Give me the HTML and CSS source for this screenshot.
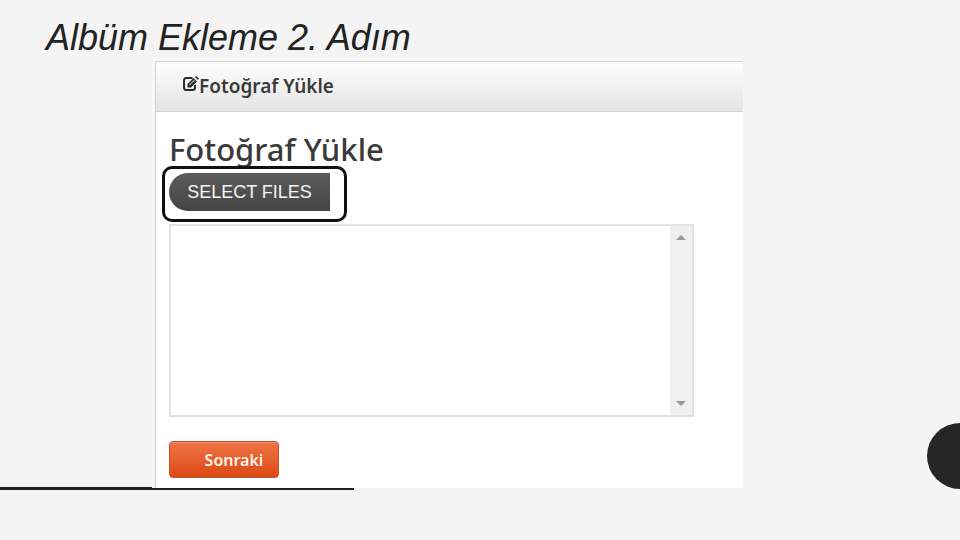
FILE: index.html
```html
<!DOCTYPE html>
<html lang="tr">
<head>
  <meta charset="utf-8">
  <title>Albüm Ekleme 2. Adım</title>
  <link rel="stylesheet" href="styles.css">
</head>
<body>
  <main class="slide">
    <h1 class="slide-title">Albüm Ekleme 2. Adım</h1>
    <div class="shot">
      <section class="panel">
        <header class="panel-header">
          <svg class="edit-icon" viewBox="0 0 17 16" aria-hidden="true">
            <path d="M10.5 2H4.500Q2 2 2 4.500v7Q2 14 4.500 14h6q2.500 0 2.500-2.500V9" fill="none" stroke="#2b2b2b" stroke-width="2"/>
            <path d="M5.500 11.500V8l6-6 3.500 3.500-6 6z" fill="#2b2b2b"/>
            <path d="M13 1l1-1 3 2.500-1 1.500z" fill="#2b2b2b"/>
            <path d="M7.500 9l5-5" stroke="#f5f5f5" stroke-width="1"/>
          </svg>
          <span>Fotoğraf Yükle</span>
        </header>
        <form class="panel-body">
          <h2 class="panel-title"><label for="files">Fotoğraf Yükle</label></h2>
          <div class="picker">
            <button class="select-files" type="button">SELECT FILES</button>
          </div>
          <div class="queue">
            <textarea class="queue-list" id="files"></textarea>
            <div class="scrollbar" aria-hidden="true">
              <svg class="arrow" viewBox="0 0 10 5"><path d="M0 5L5 0l5 5z"/></svg>
              <svg class="arrow" viewBox="0 0 10 5"><path d="M0 0l5 5 5-5z"/></svg>
            </div>
          </div>
          <button class="next" type="submit">Sonraki</button>
        </form>
      </section>
    </div>
  </main>
</body>
</html>
```
FILE: styles.css
```css
* {
  box-sizing: border-box;
}

body {
  margin: 0;
  background: #f4f4f4;
  font-family: "Noto Sans", "Open Sans", sans-serif;
  color: #3a3a3a;
}

.slide {
  position: relative;
  isolation: isolate;
  min-height: 100vh;
  overflow: hidden;
  padding: 18px 217px 52px 152px;
}

/* rule and disc of the slide theme, behind the content */
.slide::before {
  content: "";
  position: absolute;
  z-index: -1;
  left: 0;
  bottom: 50px;
  width: 354px;
  height: 3px;
  background: #231f20;
}

.slide::after {
  content: "";
  position: absolute;
  right: -33px;
  bottom: 51px;
  width: 66px;
  height: 66px;
  border-radius: 50%;
  background: #262626;
}

.slide-title {
  margin: 0 0 0 -106px;
  font: italic 400 36px/39px "Liberation Sans", Arial, sans-serif;
  color: #222;
  white-space: nowrap;
}

.shot {
  padding: 4px 0 0 3px;
  background: #f7f7f7;
}

.panel {
  border-top: 1px solid #d5d5d5;
  border-left: 1px solid #d5d5d5;
  border-top-left-radius: 2px;
  background: #fff;
}

.panel-header {
  display: flex;
  align-items: center;
  height: 50px;
  padding: 0 0 2px 26px;
  border-bottom: 1px solid #d2d2d2;
  background: linear-gradient(#fefefe, #e4e4e4);
  font-size: 19px;
  font-weight: 600;
}

.edit-icon {
  width: 17px;
  height: 16px;
  margin-bottom: 4px;
}

.panel-body {
  padding: 17px 49px 10px 13px;
}

.panel-title {
  margin: 0;
  font-size: 31px;
  font-weight: 500;
  line-height: 40px;
}

.picker {
  position: relative;
  display: flex;
  width: fit-content;
  margin: 4px 0 13px;
}

/* highlight ring drawn around the picker */
.picker::after {
  content: "";
  position: absolute;
  inset: -7px -17px -11px -7px;
  border: 3px solid #111;
  border-radius: 10px;
  pointer-events: none;
}

.select-files {
  width: 161px;
  height: 38px;
  padding: 0;
  border: 0;
  border-radius: 19px 0 0 19px;
  background: linear-gradient(#5c5c5c, #444);
  color: #f4f4f4;
  font: 400 18px "Liberation Sans", Arial, sans-serif;
}

.queue {
  display: flex;
  height: 193px;
  border: 2px solid #e2e2e2;
}

.queue-list {
  flex: 1;
  padding: 4px;
  border: 0;
  outline: 0;
  resize: none;
  overflow: hidden;
  background: #fff;
}

.scrollbar {
  display: flex;
  flex-direction: column;
  align-items: center;
  justify-content: space-between;
  width: 22px;
  padding: 9px 0;
  background: #f0f0f0;
}

.arrow {
  width: 10px;
  height: 5px;
  fill: #999;
}

.next {
  display: block;
  width: 110px;
  height: 37px;
  margin-top: 24px;
  padding: 0 0 0 20px;
  border: 1px solid #bd5430;
  border-radius: 4px;
  background: linear-gradient(#ef7547, #dc4814);
  box-shadow: inset 0 1px 0 #eb9474;
  color: #fff3e6;
  font: 600 16px "Noto Sans", sans-serif;
}
```
